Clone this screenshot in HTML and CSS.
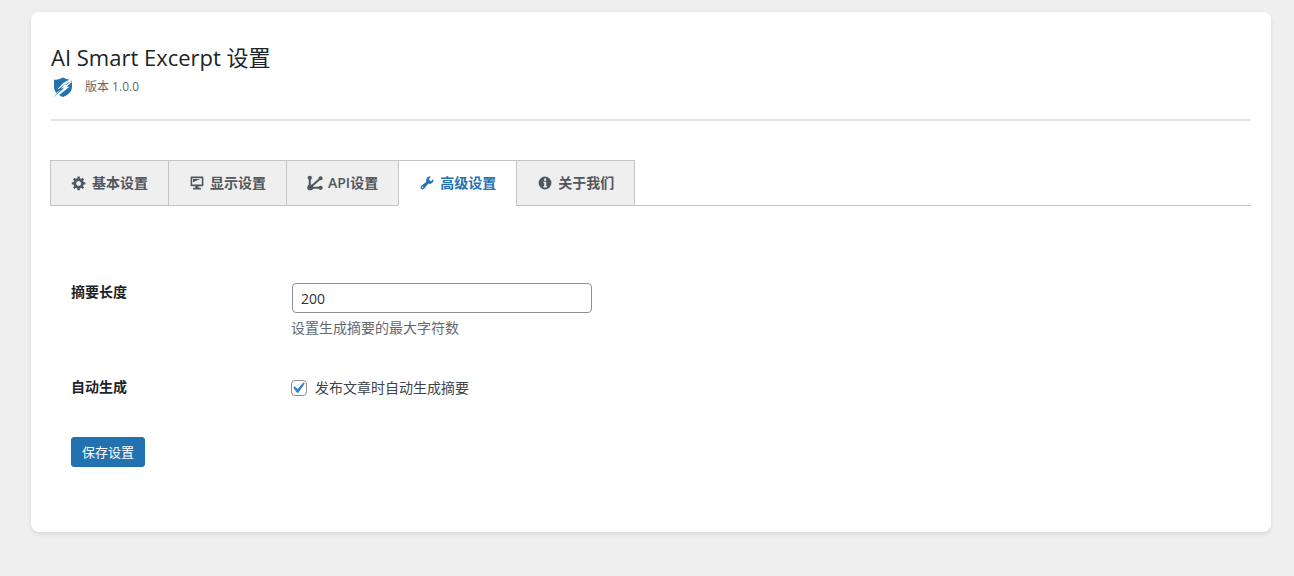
FILE: index.html
```html
<!DOCTYPE html>
<html lang="zh-CN">
<head>
    <meta charset="utf-8">
    <meta name="viewport" content="width=device-width, initial-scale=1.0">
    <title>AI Smart Excerpt 设置</title>
    <link rel="stylesheet" href="styles.css">
</head>
<body>
    <div class="wrap">
        <header class="plugin-header">
            <h1>AI Smart Excerpt 设置</h1>
            <div class="plugin-meta">
                <svg class="logo" viewBox="0 0 24 24" aria-hidden="true">
                    <path fill="#2271b1" d="M12 2.500c3 1.800 5.600 2.300 9 2.300v6.700c0 5.500-3.800 8.500-9 10.500-5.200-2-9-5-9-10.500V4.800c3.400 0 6-.5 9-2.300z"/>
                    <path fill="#fff" d="M21.500 2.500 12 8.200l-5.500 6 4-.8L1.500 21.500l2.500.5 8-6 5.500-6.500-4 .8L22.500 4.500z"/>
                    <path fill="#2271b1" d="M22.500 1.500 14 8.700l-4.200 4.800 3.700-.7L2 22.500l7.300-7.800-2.500.3L14 8.500z"/>
                    <path fill="none" stroke="#fff" stroke-width="1.400" d="m20.500 6.500-7 6.200 2.800-.2L6.500 20.500"/>
                </svg>
                <span class="version">版本 1.0.0</span>
            </div>
        </header>

        <nav class="nav-tabs">
            <a href="#basic" class="nav-tab">
                <svg class="icon" viewBox="0 0 20 20" aria-hidden="true"><path d="M18 12h-2.180c-.17.7-.44 1.350-.81 1.930l1.540 1.540-2.100 2.100-1.540-1.540c-.58.36-1.230.63-1.910.79V19H8v-2.180c-.68-.16-1.330-.43-1.910-.79l-1.540 1.540-2.120-2.120 1.540-1.540c-.36-.58-.63-1.230-.79-1.910H1V9.030h2.170c.16-.7.44-1.350.8-1.940L2.430 5.550l2.100-2.100 1.540 1.540c.58-.37 1.240-.64 1.930-.81V2h3v2.180c.68.16 1.330.43 1.910.79l1.540-1.540 2.120 2.120-1.540 1.540c.36.59.64 1.240.8 1.940H18V12zm-8.500 1.500c1.660 0 3-1.340 3-3s-1.340-3-3-3-3 1.340-3 3 1.340 3 3 3z"/></svg>
                基本设置
            </a>
            <a href="#display" class="nav-tab">
                <svg class="icon" viewBox="0 0 20 20" aria-hidden="true"><path fill-rule="evenodd" d="M3 2h14c.6 0 1 .4 1 1v10c0 .6-.4 1-1 1h-5v2h2c.6 0 1 .4 1 1v1H5v-1c0-.6.4-1 1-1h2v-2H3c-.6 0-1-.4-1-1V3c0-.6.4-1 1-1zm1 2v8h12V4H4zm1 1h9L5 9V5z"/></svg>
                显示设置
            </a>
            <a href="#api" class="nav-tab">
                <svg class="icon" viewBox="0 0 20 20" aria-hidden="true">
                    <path fill="none" stroke="currentColor" stroke-width="2.500" d="M3.500 3.500v12.500H17M3.500 16 17 4"/>
                    <circle cx="3.500" cy="3.500" r="2.700"/>
                    <circle cx="17" cy="4" r="2.500"/>
                    <circle cx="4" cy="15.500" r="3.700"/>
                    <circle cx="17" cy="16" r="2.700"/>
                </svg>
                API设置
            </a>
            <a href="#advanced" class="nav-tab nav-tab-active" aria-current="page">
                <svg class="icon" viewBox="0 0 20 20" aria-hidden="true"><path d="M16.680 9.770c-1.340 1.340-3.300 1.670-4.950.99l-5.410 6.520c-.99.99-2.590.99-3.580 0s-.99-2.590 0-3.570l6.520-5.420c-.68-1.650-.35-3.610.99-4.950 1.280-1.280 3.120-1.620 4.720-1.060l-2.890 2.890 2.820 2.820 2.860-2.870c.53 1.580.18 3.390-1.080 4.650zM3.810 16.210c.4.39 1.040.39 1.430 0 .4-.4.4-1.040 0-1.430-.39-.4-1.030-.4-1.430 0-.39.39-.39 1.030 0 1.430z"/></svg>
                高级设置
            </a>
            <a href="#about" class="nav-tab">
                <svg class="icon" viewBox="0 0 20 20" aria-hidden="true"><path fill-rule="evenodd" d="M10 2a8 8 0 1 1 0 16 8 8 0 0 1 0-16zm-1.200 2.500v2.700h2.700V4.500H8.800zM8 8.500V10h1v4H8v1.500h4.500V14h-1V8.500H8z"/></svg>
                关于我们
            </a>
        </nav>

        <form class="settings-form">
            <div class="form-row">
                <label class="form-label" for="excerpt_length">摘要长度</label>
                <div class="form-field">
                    <input type="text" inputmode="numeric" id="excerpt_length" class="regular-text" value="200">
                    <p class="description">设置生成摘要的最大字符数</p>
                </div>
            </div>
            <div class="form-row">
                <span class="form-label">自动生成</span>
                <div class="form-field">
                    <label class="check-label">
                        <input type="checkbox" class="checkbox" checked>
                        <!-- tick drawn over the box -->
                        <svg class="tick" viewBox="0 0 20 20" aria-hidden="true"><path fill="#3582c4" d="M14.830 4.890l1.340.94-5.810 8.380H9.020L5.780 9.670l1.340-1.250 2.570 2.400z"/></svg>
                        发布文章时自动生成摘要
                    </label>
                </div>
            </div>
            <button type="submit" class="button-primary">保存设置</button>
        </form>
    </div>
</body>
</html>
```

FILE: styles.css
```css
body {
    margin: 0;
    padding: 12px 23px 44px 31px;
    background: #efefef;
    color: #3c434a;
    font-family: "Open Sans", "Noto Sans CJK SC", sans-serif;
    font-size: 14px;
    line-height: 20px;
}

.wrap {
    padding: 20px;
    background: #fff;
    border-radius: 8px;
    box-shadow: 0 2px 4px rgba(0, 0, 0, 0.1);
}

.plugin-header {
    padding: 10px 0 20px;
    margin-bottom: 39px;
    border-bottom: 2px solid #e5e5e5;
}

h1 {
    margin: 0;
    color: #1d2327;
    font-size: 22px;
    font-weight: 400;
    line-height: 30px;
}

.plugin-meta {
    display: flex;
    align-items: center;
    gap: 10px;
    padding-top: 3px;
}

.logo {
    width: 24px;
    height: 24px;
}

.version {
    color: #666;
    font-size: 12px;
}

.nav-tabs {
    display: flex;
    margin-left: -1px;
    border-bottom: 1px solid #c3c4c7;
}

.nav-tab {
    display: flex;
    align-items: center;
    gap: 5px;
    margin-bottom: -1px;
    padding: 12px 20px;
    border: 1px solid #c3c4c7;
    border-right: 0;
    background: #efefef;
    color: #50575e;
    font-weight: 600;
    text-decoration: none;
}

.nav-tab:last-child {
    border-right: 1px solid #c3c4c7;
}

.nav-tab-active {
    border-bottom-color: #fff;
    background: #fff;
    color: #2271b1;
}

.icon {
    width: 16px;
    height: 16px;
    fill: currentColor;
}

.settings-form {
    padding: 62px 20px 45px;
}

.form-row {
    display: flex;
    gap: 20px;
    margin-bottom: 25px;
}

.form-label {
    width: 200px;
    padding-top: 14px;
    color: #1d2327;
    font-weight: 600;
}

.form-field {
    flex: 1;
    padding-top: 15px;
}

.regular-text {
    display: block;
    box-sizing: border-box;
    width: 300px;
    max-width: 100%;
    height: 30px;
    margin: 0 1px;
    padding: 0 8px;
    border: 1px solid #8c8f94;
    border-radius: 4px;
    background: #fff;
    color: #2c3338;
    font: inherit;
}

.description {
    margin: 5px 0 0;
    color: #646970;
}

.check-label {
    display: flex;
    align-items: center;
    position: relative;
}

.checkbox {
    appearance: none;
    box-sizing: border-box;
    width: 16px;
    height: 16px;
    margin: 0 8px 0 0;
    border: 1px solid #8c8f94;
    border-radius: 4px;
    background: #fff;
}

.tick {
    display: none;
    position: absolute;
    left: -4px;
    width: 22px;
    height: 22px;
    pointer-events: none;
}

.checkbox:checked + .tick {
    display: block;
}

.button-primary {
    display: block;
    height: 30px;
    margin-top: 39px;
    padding: 0 10px;
    border: 1px solid #2271b1;
    border-radius: 3px;
    background: #2271b1;
    color: #fff;
    font-family: inherit;
    font-size: 13px;
    line-height: 26px;
    cursor: pointer;
}

@media (max-width: 700px) {
    .nav-tabs,
    .form-row {
        flex-wrap: wrap;
    }
}
```
